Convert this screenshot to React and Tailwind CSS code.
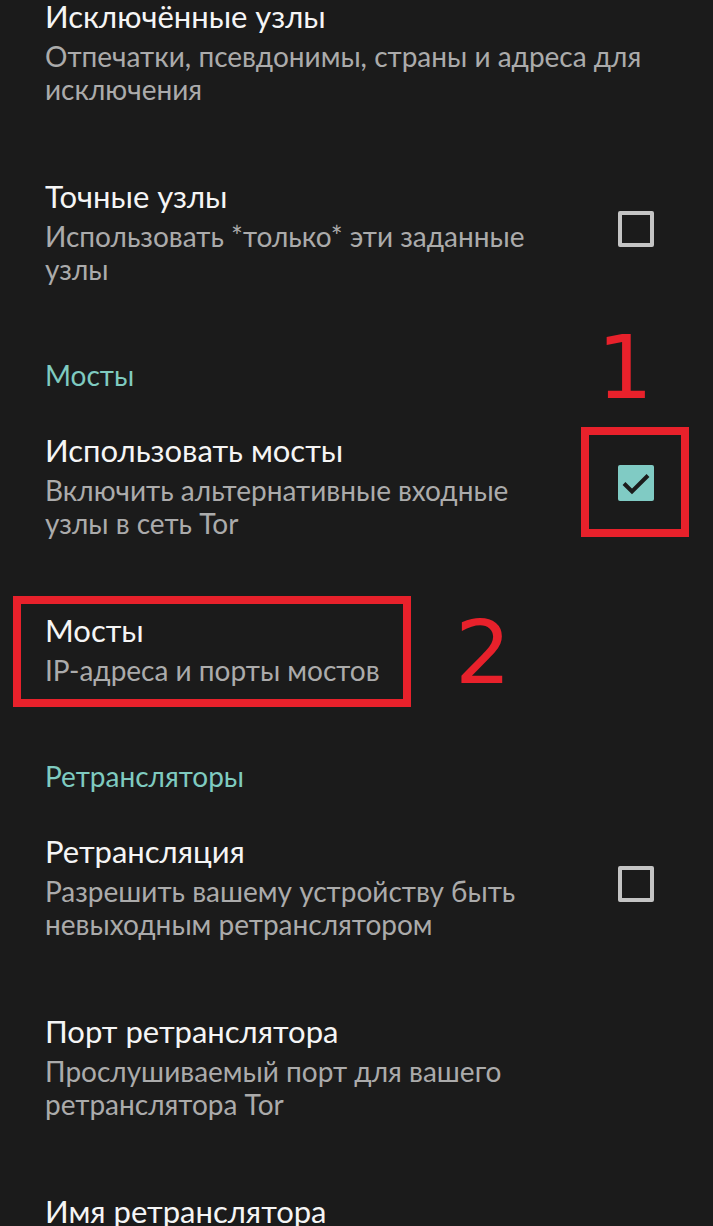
import React from "react";

// one row of the settings list
function PrefRow({ title, summary, checkbox, checked, first, textWidth }) {
  return (
    <div className={`flex items-center pl-[45px] pr-[59px] ${first ? "-mt-[2px] pt-0" : "pt-[36px]"} pb-[36px]`}>
      <div className={`flex flex-col ${textWidth}`}>
        <div className="text-[31px] leading-[36px] text-[#f5f5f5]">{title}</div>
        {summary && (
          <div className="mt-[6px] text-[28px] leading-[33px] text-[#ababab]">{summary}</div>
        )}
      </div>
      <div className="flex-1" />
      {checkbox && (
        <div className="-mt-[6px]">
          {checked ? (
            <div className="h-[36px] w-[36px] rounded-[2px] bg-[#80cbc4]">
              <svg width="36" height="36" viewBox="0 0 36 36" fill="none">
                <path d="M6 18.5l8 8L30 10.5" stroke="#1b1b1b" strokeWidth="4" />
              </svg>
            </div>
          ) : (
            <div className="h-[36px] w-[36px] rounded-[2px] border-[4px] border-[#c4c4c4]" />
          )}
        </div>
      )}
    </div>
  );
}

function Header({ children }) {
  return (
    <div className="pl-[45px] pt-[36px] pb-[4px] text-[28px] leading-[34px] text-[#7fcbc0]">{children}</div>
  );
}

export default function App() {
  return (
    <div
      className="relative h-[1226px] w-[713px] overflow-hidden bg-[#1b1b1b]"
      style={{ fontFamily: "Lato, 'Noto Sans', sans-serif" }}
    >
      <PrefRow
        first
        title="Исключённые узлы"
        summary="Отпечатки, псевдонимы, страны и адреса для исключения"
        textWidth="w-[610px]"
      />
      <PrefRow
        title="Точные узлы"
        summary="Использовать *только* эти заданные узлы"
        checkbox
        textWidth="w-[500px]"
      />
      <Header>Мосты</Header>
      <PrefRow
        title="Использовать мосты"
        summary="Включить альтернативные входные узлы в сеть Tor"
        checkbox
        checked
        textWidth="w-[500px]"
      />
      <PrefRow title="Мосты" summary="IP-адреса и порты мостов" textWidth="w-[500px]" />
      <Header>Ретрансляторы</Header>
      <PrefRow
        title="Ретрансляция"
        summary="Разрешить вашему устройству быть невыходным ретранслятором"
        checkbox
        textWidth="w-[500px]"
      />
      <PrefRow
        title="Порт ретранслятора"
        summary="Прослушиваемый порт для вашего ретранслятора Tor"
        textWidth="w-[500px]"
      />
      <PrefRow title="Имя ретранслятора" summary="" textWidth="w-[500px]" />

      {/* red annotations drawn over the screenshot */}
      <div
        className="absolute left-[597px] top-[318px] text-[88px] leading-[100px] text-[#e8212b]"
        style={{ fontFamily: "'DejaVu Sans', sans-serif" }}
      >
        1
      </div>
      <div className="absolute left-[581px] top-[427px] h-[110px] w-[108px] border-[8px] border-[#e8212b]" />
      <div
        className="absolute left-[455px] top-[603px] text-[88px] leading-[100px] text-[#e8212b]"
        style={{ fontFamily: "'DejaVu Sans', sans-serif" }}
      >
        2
      </div>
      <div className="absolute left-[13px] top-[596px] h-[111px] w-[398px] border-[8px] border-[#e8212b]" />
    </div>
  );
}
